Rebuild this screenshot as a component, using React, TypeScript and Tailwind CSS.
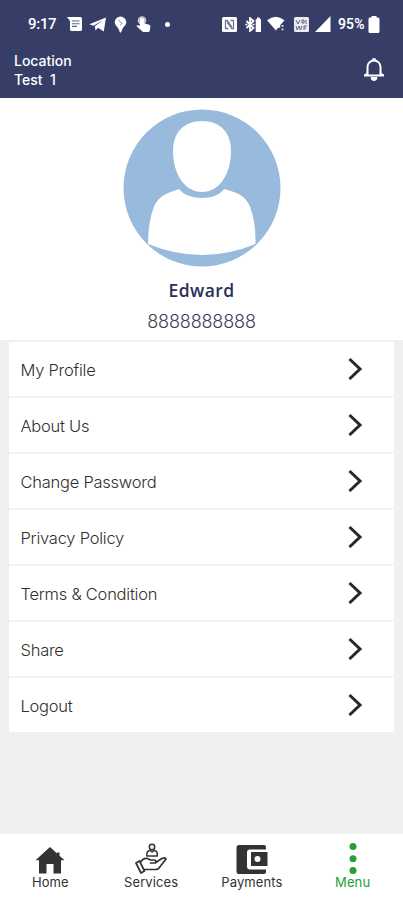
import type { ReactNode } from "react";

const MENU_ITEMS = [
  "My Profile",
  "About Us",
  "Change Password",
  "Privacy Policy",
  "Terms & Condition",
  "Share",
  "Logout",
];

function StatusBar() {
  return (
    <div className="flex h-12 items-center pl-7 text-white">
      <span className="w-[29px] whitespace-nowrap font-[Roboto] text-[15px] font-medium leading-none tracking-[-0.3px]">
        9:17
      </span>
      {/* messages */}
      <svg className="ml-[10px] h-[14px] w-[15px]" viewBox="0 0 15 14" fill="currentColor">
        <path d="M0 0h13.500q1.500 0 1.500 1.500v11q0 1.500-1.500 1.500h-9Q3 14 3 12.500V4Z" />
        <path d="M5 4h7.500M5 6.700h7.500M5 9.400h5" stroke="#5c638a" strokeWidth="1.100" />
      </svg>
      {/* telegram */}
      <svg className="ml-[7px] h-[15px] w-[18px]" viewBox="0 0 18 15" fill="currentColor">
        <path d="M17 0.500 14.800 14.500 9 10.800 6.500 13.500 5.800 9.200 14 3 4.500 8.700 0.300 7.300Z" />
      </svg>
      {/* location pin */}
      <svg className="ml-[7px] h-[17px] w-[13px]" viewBox="0 0 13 17" fill="currentColor">
        <path d="M6.500.5A5.800 5.800 0 0 0 .7 6.300c0 3.200 3.300 4.200 4.500 8.200.3 1.500.8 2 1.300 2s1-.5 1.300-2c1.200-4 4.500-5 4.500-8.200A5.800 5.800 0 0 0 6.500.5Z" />
        <path d="m4.500 4 3.500 3.500-2 1.500" fill="none" stroke="#b4b8ca" strokeWidth="1.200" />
      </svg>
      {/* touch */}
      <svg className="ml-[9px] h-[16px] w-[15px]" viewBox="0 0 15 16" fill="currentColor">
        <circle cx="6" cy="4.500" r="4.300" opacity=".7" />
        <path d="M4 4a2 2 0 0 1 4 0v3.300l5.200 1.500q1.400.4 1.200 1.700l-.6 3.900q-.2 1.500-1.600 1.500H7L.8 10.500q-.4-1.500 1-1.300l2.200.5Z" />
      </svg>
      <span className="ml-[14px] size-[5px] rounded-full bg-white" />
      {/* nfc */}
      <svg className="ml-[52px] h-[15px] w-[15px]" viewBox="0 0 15 15">
        <rect width="15" height="15" rx="1.500" fill="currentColor" />
        <path d="M6.500 11.500h-3v-8h1.700l4.600 6.500M8.500 3.500h3v8h-1.700L5.200 5" fill="none" stroke="#6f769a" strokeWidth="1.300" />
      </svg>
      {/* bluetooth with battery */}
      <svg className="ml-[8px] h-[15px] w-[16px]" viewBox="0 0 16 15" fill="none" stroke="currentColor">
        <path d="m1.500 4 7 7L5 14V1l3.500 3-7 7" strokeWidth="1.800" />
        <path d="M.3 7.500h2M7.500 7.500h2" strokeWidth="1.600" />
        <path d="M10.700 2H12V.5h2.800V2h1.200v13h-5.300Z" fill="currentColor" stroke="none" />
      </svg>
      {/* wifi */}
      <svg className="ml-[6px] h-[16px] w-[18px]" viewBox="0 0 18 16" fill="currentColor">
        <path d="M0 4.200Q8.700-2.800 17.500 4.200L13.200 9.300v2.200L10.800 12 9 14.500Z" />
        <path d="M14.500 9h2v1.800h-2Zm0 3.500h2v1.800h-2Z" opacity=".8" />
      </svg>
      {/* vo-wifi */}
      <svg className="ml-[9px] h-[15px] w-[15px]" viewBox="0 0 15 15">
        <rect width="15" height="15" rx="1.500" fill="currentColor" opacity=".9" />
        <path d="m2 3 2 4 2-4M8 3h2v3H8ZM2 9l1.200 4L5 9l1.500 4L8 9M10 13V9h3M10 11h2M12 3v4" fill="none" stroke="#5d648a" strokeWidth="1" />
      </svg>
      {/* signal */}
      <svg className="ml-[6px] h-[16px] w-[16px]" viewBox="0 0 16 16" fill="currentColor">
        <path d="M15.500 0v16H0Z" />
      </svg>
      <span className="ml-[7px] w-[30px] whitespace-nowrap font-[Roboto] text-[14px] font-semibold leading-none tracking-[0.1px]">
        95%
      </span>
      {/* battery */}
      <svg className="h-[17px] w-[12px]" viewBox="0 0 12 17" fill="currentColor">
        <path d="M3.500 0h5v1.500H10q1.500 0 1.500 1.500v12.500Q11.500 17 10 17H2Q.5 17 .5 15.500V3Q.5 1.500 2 1.500h1.500Z" />
      </svg>
    </div>
  );
}

function Header() {
  return (
    <header className="h-[98px] shrink-0 bg-[#363e68]">
      <StatusBar />
      <div className="flex items-start justify-between pl-[14px] pr-[18px] pt-1 text-white">
        <div className="-mt-px font-[Inter] text-[14px] font-medium leading-[19px]">
          <p>Location</p>
          <p>Test&nbsp; 1</p>
        </div>
        <svg className="mt-[5px] h-[25px] w-[22px]" viewBox="0 0 22 25" fill="none" stroke="currentColor" strokeWidth="2">
          <path d="M4.500 18V10a6.500 6.500 0 0 1 13 0v8" />
          <path d="M1 18.500h20" />
          <path d="m4.500 16-3 2.500M17.500 16l3 2.500" strokeWidth="1.500" />
          <path d="M9.300 2.500h3.400" strokeWidth="2.500" />
          <path d="M8 20.500a3 3 0 0 0 6 0Z" fill="currentColor" strokeWidth="1" />
        </svg>
      </div>
    </header>
  );
}

function Profile() {
  return (
    <section className="flex h-[242px] shrink-0 flex-col items-center bg-white pt-[11px]">
      <svg className="h-[158px] w-[158px]" viewBox="0 0 158 158">
        <circle cx="79" cy="79" r="78.500" fill="#97badd" />
        <path
          d="M79 12C60 12 50 24.500 50 42c0 22 11 41 29 41s29-19 29-41c0-17.500-10-30-29-30Z"
          fill="#fff"
        />
        <path
          d="M56 80C65 92 93 92 101 80C116 84.500 122 86.500 127 97.500Q133 113.500 132.500 135Q106 146 79 146Q52 146 25 135Q25 112.500 31 97.500C36 86.500 44 84 56 80Z"
          fill="#fff"
        />
      </svg>
      <h1 className="mt-[10px] font-['Open_Sans'] text-[17.5px] font-semibold leading-[26px] tracking-[0.4px] text-[#2c2f58]">
        Edward
      </h1>
      <p className="mt-[6px] font-[Inter] text-[18px] font-light leading-[26px] tracking-[-0.15px] text-[#3d405c]">
        8888888888
      </p>
    </section>
  );
}

function MenuRow({ label }: { label: string }) {
  return (
    <button
      type="button"
      className="flex h-[54px] w-full items-center justify-between bg-white pl-[11.5px] pr-[31px] text-left"
    >
      <span className="mt-px font-[Inter] text-[16.5px] font-light leading-6 tracking-[-0.25px] text-[#303030]">
        {label}
      </span>
      <svg className="h-6 w-[15px]" viewBox="0 0 15 24" fill="none" stroke="#25272b" strokeWidth="3">
        <path d="m1.500 2 10.500 10L1.500 22" />
      </svg>
    </button>
  );
}

function NavItem({ label, active, children }: { label: string; active?: boolean; children: ReactNode }) {
  return (
    <button
      type="button"
      className={`flex flex-1 flex-col items-center ${active ? "text-[#24a137]" : "text-[#333333]"}`}
    >
      <span className="flex h-[31px] items-end">{children}</span>
      <span className="font-[Inter] text-[13px] leading-[16px] tracking-[0.1px]">{label}</span>
    </button>
  );
}

function BottomNav() {
  return (
    <nav className="flex h-[66px] shrink-0 bg-white pt-[9px]">
      <NavItem label="Home">
        <svg className="h-[27px] w-[30px]" viewBox="0 0 30 27" fill="#333">
          <path d="M15 0 .5 13.200H4V26.500h7.500V17h7v9.500H26V13.200h3.500L24.500 8.700V5.500h-2.500v1Z" />
        </svg>
      </NavItem>
      <NavItem label="Services">
        <svg className="h-[31px] w-[32px]" viewBox="0 0 32 31" fill="none" stroke="#333" strokeWidth="1.500" strokeLinejoin="round" strokeLinecap="round">
          <circle cx="17" cy="4" r="2.700" />
          <path d="M11.800 13q-.5-5 3.300-5.800l2 1.700 2-1.700q3.700.8 3.200 5.800Z" />
          <path d="m1 20 3.500-2 5 10-3.500 2Z" strokeWidth="1.700" />
          <path d="M5.500 19q3-4.500 7-3.500l3 1.500h4q2.500 1 .5 3h-4.500M20.500 19.800l6-4q4-2 4.500.2l-7 9q-1 1.500-3 1.500H9.500" strokeWidth="1.700" />
        </svg>
      </NavItem>
      <NavItem label="Payments">
        <svg className="h-[30px] w-[32px]" viewBox="0 0 32 30">
          <path d="M3 1h25q2 0 2 2v2.500H14q-3 0-3 3V22.500q0 3 3 3h16V28q0 2-2 2H3q-2.500 0-2.500-2.500v-24Q.5 1 3 1Z" fill="#333" />
          <path d="M15 8h16.500v14H15Z" fill="#333" />
          <circle cx="21.500" cy="15" r="3" fill="#fff" />
        </svg>
      </NavItem>
      <NavItem label="Menu" active>
        <svg className="h-[31px] w-[8px]" viewBox="0 0 8 31" fill="currentColor">
          <circle cx="4" cy="3.500" r="3.500" />
          <circle cx="4" cy="15.700" r="3.500" />
          <circle cx="4" cy="27.500" r="3.500" />
        </svg>
      </NavItem>
    </nav>
  );
}

export default function App() {
  return (
    <div className="flex h-[900px] w-[403px] flex-col overflow-hidden bg-[#f0f0f0]">
      <Header />
      <Profile />
      <main className="flex-1 px-[9px] pt-[2px]">
        <div className="flex flex-col gap-[2px] bg-[#f3f3f3]">
          {MENU_ITEMS.map((label) => (
            <MenuRow key={label} label={label} />
          ))}
        </div>
      </main>
      <BottomNav />
    </div>
  );
}
